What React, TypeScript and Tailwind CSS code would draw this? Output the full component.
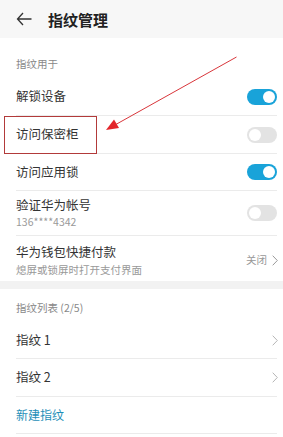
import React from "react";

const font = { fontFamily: '"Noto Sans CJK SC", "Noto Sans", sans-serif' };

function Toggle({ on }: { on: boolean }) {
  return on ? (
    <div className="w-[30px] h-[16px] rounded-full bg-[#19a3d9] flex items-center justify-end pr-[2px]">
      <div className="w-[12px] h-[12px] rounded-full bg-white" />
    </div>
  ) : (
    <div className="w-[30px] h-[16px] rounded-full bg-[#e3e3e3] flex items-center justify-start pl-[2px]">
      <div className="w-[12px] h-[12px] rounded-full bg-white" />
    </div>
  );
}

function Chevron({ color = "#b5b5b5" }: { color?: string }) {
  return (
    <svg width="6" height="11" viewBox="0 0 6 11" fill="none">
      <path d="M0.7 0.7 L5.3 5.5 L0.7 10.3" stroke={color} strokeWidth="1" />
    </svg>
  );
}

function Divider() {
  return <div className="ml-4 mr-[6px] h-px bg-[#ebebeb]" />;
}

export default function App() {
  return (
    <div className="relative w-[283px] h-[437px] bg-white overflow-hidden" style={font}>
      {/* Header */}
      <div className="h-[38px] bg-[#f7f7f7] flex items-center">
        <svg className="ml-[16px]" width="16" height="14" viewBox="0 0 16 14" fill="none">
          <path d="M7 1 L1.5 7 L7 13 M1.5 7 H15.5" stroke="#333" strokeWidth="1.3" />
        </svg>
        <span className="ml-[16px] text-[15px] font-bold text-[#222] leading-none">指纹管理</span>
      </div>

      {/* Section 1 */}
      <div className="h-[40px] flex items-end pb-[9px] px-4">
        <span className="text-[10.5px] text-[#888] leading-none">指纹用于</span>
      </div>
      <div className="h-[37px] flex items-center justify-between pl-4 pr-[6px]">
        <span className="text-[12.5px] text-[#333]">解锁设备</span>
        <Toggle on />
      </div>
      <Divider />
      <div className="h-[37px] flex items-center justify-between pl-4 pr-[6px]">
        <span className="text-[12.5px] text-[#333]">访问保密柜</span>
        <Toggle on={false} />
      </div>
      <Divider />
      <div className="h-[36px] flex items-center justify-between pl-4 pr-[6px]">
        <span className="text-[12.5px] text-[#333]">访问应用锁</span>
        <Toggle on />
      </div>
      <Divider />
      <div className="h-[44px] flex items-center justify-between pl-4 pr-[6px]">
        <div className="flex flex-col">
          <span className="text-[12.5px] text-[#333] leading-[18px]">验证华为帐号</span>
          <span className="text-[10.5px] text-[#999] leading-[16px]">136****4342</span>
        </div>
        <Toggle on={false} />
      </div>
      <Divider />
      <div className="h-[45px] flex items-center justify-between pl-4 pr-[5px] pt-[3px]">
        <div className="flex flex-col">
          <span className="text-[12.5px] text-[#333] leading-[18px]">华为钱包快捷付款</span>
          <span className="text-[10.5px] text-[#999] leading-[17px]">熄屏或锁屏时打开支付界面</span>
        </div>
        <div className="flex items-center gap-[5px]">
          <span className="text-[10.5px] text-[#999]">关闭</span>
          <Chevron color="#999" />
        </div>
      </div>

      {/* Gap band */}
      <div className="h-[8px] bg-[#f2f2f2]" />

      {/* Section 2 */}
      <div className="h-[33px] flex items-end pb-[9px] px-4">
        <span className="text-[10.5px] text-[#888] leading-none">指纹列表 (2/5)</span>
      </div>
      <div className="h-[36px] flex items-center justify-between pl-4 pr-[5px]">
        <span className="text-[12.5px] text-[#333]">指纹 1</span>
        <Chevron />
      </div>
      <Divider />
      <div className="h-[37px] flex items-center justify-between pl-4 pr-[5px]">
        <span className="text-[12.5px] text-[#333]">指纹 2</span>
        <Chevron />
      </div>
      <Divider />
      <div className="h-[36px] flex items-center pl-4">
        <span className="text-[12px] text-[#1f8fb8]">新建指纹</span>
      </div>
      <Divider />

      {/* Annotation box */}
      <div className="absolute left-[4px] top-[116px] w-[93px] h-[38px] border border-[#b23a3a]" />
      {/* Annotation arrow */}
      <svg className="absolute left-0 top-0" width="283" height="437" viewBox="0 0 283 437">
        <line x1="236.5" y1="57" x2="114" y2="125.5" stroke="#d9363b" strokeWidth="1" />
        <polygon points="106,130 114,119.5 119,128" fill="#e3262b" />
      </svg>
    </div>
  );
}
